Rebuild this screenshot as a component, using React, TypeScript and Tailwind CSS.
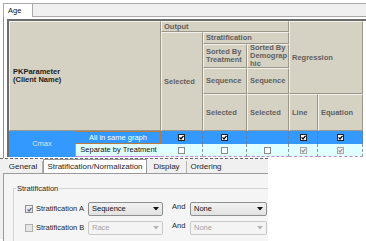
import React from 'react';

type BoxKind = 'on' | 'off' | 'dis' | 'none';

function Tick({ color }: { color: string }) {
    return (
        <svg width="5" height="5" viewBox="0 0 5 5" className="block">
            <path d="M0.6 2.4 L2 3.9 L4.5 0.8" fill="none" stroke={color} strokeWidth="1.3" />
        </svg>
    );
}

function GridBox({ kind }: { kind: BoxKind }) {
    if (kind === 'none') return null;
    if (kind === 'on') {
        return (
            <span className="w-[7px] h-[7px] bg-white border border-[#222] flex items-center justify-center">
                <Tick color="#000" />
            </span>
        );
    }
    if (kind === 'dis') {
        return (
            <span className="w-[7px] h-[7px] bg-[#f2f2f2] border border-[#a8a8a8] flex items-center justify-center">
                <Tick color="#9a9a9a" />
            </span>
        );
    }
    return <span className="w-[7px] h-[7px] bg-white border border-[#8a8a8a]" />;
}

const hd =
    'bg-[#d5d2c3] border border-t-[#f3f2ea] border-l-[#f3f2ea] border-r-[#9a978a] border-b-[#9a978a] pl-[2px] flex items-center text-[7.5px] leading-[8px] font-bold text-[#5f5f5f] whitespace-nowrap';

const rowOne: BoxKind[] = ['on', 'on', 'none', 'on', 'on'];
const rowTwo: BoxKind[] = ['off', 'off', 'off', 'dis', 'dis'];
const cols = ['col-start-3', 'col-start-4', 'col-start-5', 'col-start-6', 'col-start-7'];

function Combo({ text, disabled }: { text: string; disabled?: boolean }) {
    return (
        <div
            className={
                'h-[14px] rounded-[2px] border flex items-center pl-[3px] pr-[3px] ' +
                (disabled
                    ? 'border-[#c9c9c9] bg-[#f4f4f4] text-[#a3a3a3]'
                    : 'border-[#8e8f8f] bg-gradient-to-b from-[#f2f2f2] to-[#e2e2e2] text-[#111]')
            }
        >
            <span className="flex-1">{text}</span>
            <svg width="6" height="4" viewBox="0 0 6 4">
                <path d="M0 0 H6 L3 3.5 Z" fill={disabled ? '#b5b5b5' : '#111'} />
            </svg>
        </div>
    );
}

export default function App() {
    return (
        <div className="w-[366px] h-[241px] bg-white overflow-hidden font-['Liberation_Sans',Arial,sans-serif] text-[#111]">
            {/* top tab strip */}
            <div className="flex pt-[3px]">
                <div className="ml-[3px] w-[30px] h-[14px] border border-b-0 border-[#a9a9a9] bg-white text-[7.5px] pl-[4px] flex items-center">
                    Age
                </div>
                <div className="flex-1 h-[14px] bg-[#f0f0f0] border-t border-b border-[#a9a9a9]" />
            </div>

            <div className="ml-[3px] border-l border-[#8f8f8f] pl-[3px] pt-[2px] h-[141px]">
                <div className="border-t-2 border-l-2 border-[#6c6c6c]">
                    <div className="grid grid-cols-[66px_86px_42px_44px_42px_29px_45px] grid-rows-[11px_12px_24px_26px_37px_13px_13px]">
                        <div className={hd + ' col-start-1 col-span-2 row-start-1 row-span-5 !text-[#1c1c1c] pl-[3px]'}>
                            <span>
                                PKParameter
                                <br />
                                (Client Name)
                            </span>
                        </div>
                        <div className={hd + ' col-start-3 col-span-3 row-start-1'}>Output</div>
                        <div className={hd + ' col-start-6 col-span-2 row-start-1 row-span-4'}>Regression</div>
                        <div className={hd + ' col-start-3 row-start-2 row-span-4'}>Selected</div>
                        <div className={hd + ' col-start-4 col-span-2 row-start-2'}>Stratification</div>
                        <div className={hd + ' col-start-4 row-start-3'}>
                            <span>
                                Sorted By
                                <br />
                                Treatment
                            </span>
                        </div>
                        <div className={hd + ' col-start-5 row-start-3'}>
                            <span>
                                Sorted By
                                <br />
                                Demograp
                                <br />
                                hic
                            </span>
                        </div>
                        <div className={hd + ' col-start-4 row-start-4'}>Sequence</div>
                        <div className={hd + ' col-start-5 row-start-4'}>Sequence</div>
                        <div className={hd + ' col-start-4 row-start-5'}>Selected</div>
                        <div className={hd + ' col-start-5 row-start-5'}>Selected</div>
                        <div className={hd + ' col-start-6 row-start-5'}>Line</div>
                        <div className={hd + ' col-start-7 row-start-5'}>Equation</div>

                        {/* data rows */}
                        <div className="col-start-1 row-start-6 row-span-2 bg-[#3399ff] text-[#dfe4f0] text-[7.5px] flex items-center justify-center">
                            Cmax
                        </div>
                        <div className="col-start-2 row-start-6 bg-[#3399ff] border border-[#b57a3c] text-white text-[7.5px] flex items-center justify-center">
                            All in same graph
                        </div>
                        <div className="col-start-2 row-start-7 bg-[#e0ffff] border-l border-b border-[#c48bd0] text-[7.5px] flex items-center justify-center">
                            Separate by Treatment
                        </div>
                        {rowOne.map((k, i) => (
                            <div
                                key={'a' + i}
                                className={
                                    cols[i] +
                                    ' row-start-6 bg-[#3399ff] border-r border-dashed border-[#5b7fa8] flex items-center justify-center'
                                }
                            >
                                <GridBox kind={k} />
                            </div>
                        ))}
                        {rowTwo.map((k, i) => (
                            <div
                                key={'b' + i}
                                className={
                                    cols[i] +
                                    ' row-start-7 bg-[#e0ffff] border-r border-dashed border-r-[#8c9aa6] border-b border-b-[#c48bd0] flex items-center justify-center'
                                }
                            >
                                <GridBox kind={k} />
                            </div>
                        ))}
                    </div>
                </div>
            </div>

            {/* lower settings panel */}
            <div className="w-[268px] h-[81px] border-t border-dashed border-[#6a6a6a] bg-[#f0f0f0] flex flex-col text-[7.5px] text-[#1e1e1e]">
                <div className="flex items-end h-[18px] pl-[4px] text-[8px]">
                    <div className="w-[39px] h-[12px] flex items-center justify-center border-r border-[#b4b4b4]">General</div>
                    <div className="w-[104px] h-[14px] flex items-center justify-center bg-white border border-b-0 border-[#9a9a9a]">
                        Stratification/Normalization
                    </div>
                    <div className="w-[40px] h-[12px] flex items-center justify-center border-r border-[#b4b4b4]">Display</div>
                    <div className="w-[38px] h-[12px] flex items-center justify-center">Ordering</div>
                </div>
                <div className="flex-1 ml-[3px] border-l border-t border-[#9a9a9a] bg-[#f5f5f5] pt-[10px] pl-[9px]">
                    <fieldset className="border-t border-l border-[#d3d3d3] h-[60px]">
                        <legend className="ml-[2px] px-[1px] leading-[9px]">Stratification</legend>
                        <div className="flex items-center mt-[9px] h-[14px]">
                            <span className="ml-[11px] w-[8px] h-[8px] border border-[#8e8f8f] bg-gradient-to-b from-[#f4f4f4] to-[#dedede] flex items-center justify-center">
                                <Tick color="#5b6b8c" />
                            </span>
                            <span className="ml-[3px] w-[52px]">Stratification A</span>
                            <div className="w-[75px]">
                                <Combo text="Sequence" />
                            </div>
                            <span className="ml-[9px] w-[18px] -mt-[4px]">And</span>
                            <div className="w-[77px]">
                                <Combo text="None" />
                            </div>
                        </div>
                        <div className="flex items-center mt-[5px] h-[14px]">
                            <span className="ml-[11px] w-[8px] h-[8px] border border-[#b1b1b1] bg-[#e6e6e6]" />
                            <span className="ml-[3px] w-[52px]">Stratification B</span>
                            <div className="w-[75px]">
                                <Combo text="Race" disabled />
                            </div>
                            <span className="ml-[9px] w-[18px] -mt-[4px]">And</span>
                            <div className="w-[77px]">
                                <Combo text="None" disabled />
                            </div>
                        </div>
                    </fieldset>
                </div>
            </div>
        </div>
    );
}
